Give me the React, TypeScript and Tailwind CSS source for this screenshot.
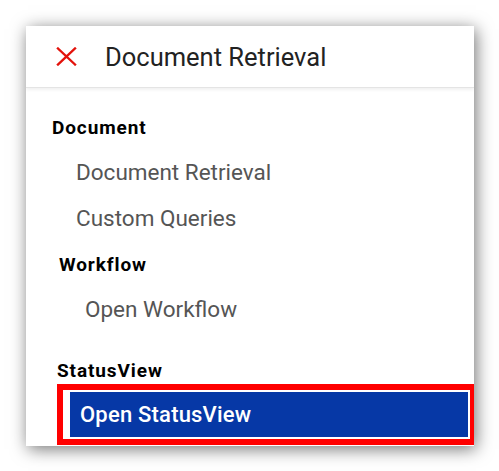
export default function App() {
  return (
    <div className="w-[499px] h-[471px] bg-white pt-[26px] pl-[26px]" style={{ fontFamily: 'Roboto, "Liberation Sans", sans-serif' }}>
      <div className="w-[448px] h-[420px] bg-white overflow-hidden shadow-[2px_3px_16px_rgba(0,0,0,0.55)]">
        {/* Header */}
        <div className="h-[62px] flex items-center pl-[30px] border-b border-[#e4e4e4] shadow-[0_2px_3px_rgba(0,0,0,0.06)]">
          <svg width="21" height="19" viewBox="0 0 21 19" className="shrink-0">
            <path d="M2 1.5 L19 17.5 M19 1.5 L2 17.5" stroke="#e3120b" strokeWidth="2.4" strokeLinecap="square" fill="none" />
          </svg>
          <span className="ml-[28px] text-[25.5px] leading-[28px] text-[#222]">Document Retrieval</span>
        </div>

        {/* Menu */}
        <div className="flex flex-col">
          <div className="mt-[29px] ml-[26px] text-[19px] leading-[22px] font-bold text-black tracking-[0.9px]">Document</div>
          <div className="mt-[20px] ml-[50px] text-[22.5px] leading-[26px] text-[#555]">Document Retrieval</div>
          <div className="mt-[20px] ml-[50px] text-[22.5px] leading-[26px] text-[#555]">Custom Queries</div>
          <div className="mt-[23px] ml-[33px] text-[19px] leading-[22px] font-bold text-black tracking-[0.9px]">Workflow</div>
          <div className="mt-[20px] ml-[59px] text-[22.5px] leading-[26px] text-[#555]">Open Workflow</div>
          <div className="mt-[38px] ml-[31px] text-[19px] leading-[22px] font-bold text-black tracking-[0.9px]">StatusView</div>
          <div className="mt-[2px] ml-[31px] w-[417px] border-[6px] border-r-[4px] border-[#ff0000] bg-white pt-[2px] pb-[2px] pl-[7px] pr-[2px]">
            <div className="h-[45px] bg-[#0638a6] flex items-center pl-[10px] text-[22px] leading-[26px] font-medium tracking-[0.2px] text-white">
              Open StatusView
            </div>
          </div>
        </div>
      </div>
    </div>
  );
}
